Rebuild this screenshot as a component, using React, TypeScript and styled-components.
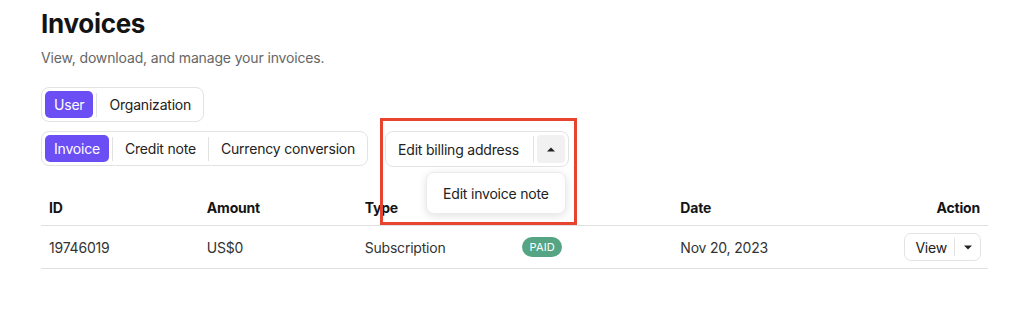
import React from 'react';
import styled, { createGlobalStyle } from 'styled-components';

const GlobalStyle = createGlobalStyle`
  body {
    margin: 0;
    background: #fff;
    font-family: Inter, "Noto Sans", sans-serif;
    color: #1c1c1c;
    letter-spacing: -0.2px;
  }
`;

const Page = styled.div`
  padding: 8px 36px 0 41px;
`;

const Title = styled.h1`
  margin: 0;
  font-size: 26px;
  line-height: 32px;
  font-weight: 700;
  letter-spacing: -0.3px;
  color: #141414;
`;

const Subtitle = styled.p`
  margin: 8px 0 0;
  font-size: 14px;
  line-height: 20px;
  letter-spacing: -0.15px;
  color: #666;
`;

const Controls = styled.div`
  margin-top: 19px;
  display: flex;
  flex-direction: column;
  align-items: flex-start;
  gap: 9px;
`;

const Toolbar = styled.div`
  display: flex;
  align-items: flex-start;
  gap: 17px;
`;

const Segmented = styled.div`
  display: inline-flex;
  align-items: center;
  padding: 3px;
  border: 1px solid #e3e3e3;
  border-radius: 8px;
  background: #fff;
`;

const Segment = styled.button<{ $active?: boolean }>`
  height: 27px;
  padding: 0 9px;
  border: none;
  border-radius: 5px;
  font-family: inherit;
  font-size: 14px;
  letter-spacing: inherit;
  cursor: pointer;
  background: ${(p) => (p.$active ? '#6b4ff4' : 'transparent')};
  color: ${(p) => (p.$active ? '#fff' : '#222')};
`;

const Divider = styled.span<{ $h?: number }>`
  width: 1px;
  height: ${(p) => p.$h ?? 24}px;
  margin: 0 3px;
  background: #e2e2e2;
`;

const BillingWrap = styled.div`
  position: relative;
`;

const SplitButton = styled.div`
  display: inline-flex;
  align-items: center;
  padding: 3px;
  border: 1px solid #e3e3e3;
  border-radius: 8px;
  background: #fff;
`;

const SplitLabel = styled.span`
  padding: 0 11px 0 9px;
  font-size: 14px;
  color: #222;
`;

const CaretBox = styled.span`
  width: 28px;
  height: 28px;
  display: flex;
  align-items: center;
  justify-content: center;
  border-radius: 4px;
  background: #f1f1f1;
`;

const Menu = styled.div`
  position: absolute;
  top: calc(100% + 5px);
  right: 3px;
  z-index: 2;
  width: 140px;
  height: 42px;
  box-sizing: border-box;
  display: flex;
  align-items: center;
  justify-content: center;
  border: 1px solid #ececec;
  border-radius: 8px;
  background: #fff;
  box-shadow: 0 2px 8px rgba(0, 0, 0, 0.12);
  font-size: 14px;
  color: #222;
`;

const Highlight = styled.div`
  position: absolute;
  top: -13px;
  left: -5px;
  right: -8px;
  bottom: -58px;
  z-index: 3;
  border: 3px solid #e8432e;
  pointer-events: none;
`;

const Table = styled.table`
  margin-top: 22px;
  width: 947px;
  border-collapse: collapse;
  table-layout: fixed;
  font-size: 14px;
`;

const Th = styled.th<{ $right?: boolean }>`
  height: 36px;
  padding: 0 8px;
  text-align: ${(p) => (p.$right ? 'right' : 'left')};
  font-weight: 700;
  color: #141414;
  border-bottom: 1px solid #e0e0e0;
`;

const Td = styled.td<{ $right?: boolean }>`
  height: 42px;
  padding: 0 ${(p) => (p.$right ? 7 : 8)}px 0 8px;
  text-align: ${(p) => (p.$right ? 'right' : 'left')};
  color: #333;
  border-bottom: 1px solid #e0e0e0;
`;

const Badge = styled.span`
  display: inline-flex;
  align-items: center;
  height: 20px;
  padding: 0 7px;
  border-radius: 10px;
  background: #55a584;
  color: #fff;
  font-size: 11px;
  font-weight: 400;
  letter-spacing: 0.2px;
`;

const ViewButton = styled.span`
  display: inline-flex;
  align-items: center;
  height: 28px;
  box-sizing: border-box;
  padding: 0 8px 0 10px;
  border: 1px solid #e3e3e3;
  border-radius: 7px;
  background: #fff;
  font-size: 14px;
  color: #222;
`;

const ViewDivider = styled.span`
  width: 1px;
  height: 18px;
  margin: 0 9px 0 7px;
  background: #e2e2e2;
`;

const Caret: React.FC<{ up?: boolean }> = ({ up }) => (
  <svg width="8" height="5" viewBox="0 0 8 5">
    <polygon points={up ? '0,4.5 4,0.5 8,4.5' : '0,0.5 4,4.5 8,0.5'} fill="#222" />
  </svg>
);

const scopes = ['User', 'Organization'];
const docTypes = ['Invoice', 'Credit note', 'Currency conversion'];
const columns = ['ID', 'Amount', 'Type', '', 'Date', 'Action'];
const invoices = [
  { id: '19746019', amount: 'US$0', type: 'Subscription', status: 'PAID', date: 'Nov 20, 2023' },
];

const SegmentGroup: React.FC<{ items: string[]; active: number }> = ({ items, active }) => (
  <Segmented>
    {items.map((item, i) => (
      <React.Fragment key={item}>
        {i > 0 && <Divider />}
        <Segment $active={i === active}>{item}</Segment>
      </React.Fragment>
    ))}
  </Segmented>
);

export default function App() {
  return (
    <Page>
      <GlobalStyle />
      <Title>Invoices</Title>
      <Subtitle>View, download, and manage your invoices.</Subtitle>
      <Controls>
        <SegmentGroup items={scopes} active={0} />
        <Toolbar>
          <SegmentGroup items={docTypes} active={0} />
          <BillingWrap>
            <SplitButton>
              <SplitLabel>Edit billing address</SplitLabel>
              <Divider $h={26} />
              <CaretBox>
                <Caret up />
              </CaretBox>
            </SplitButton>
            <Menu>Edit invoice note</Menu>
            <Highlight />
          </BillingWrap>
        </Toolbar>
      </Controls>
      <Table>
        <thead>
          <tr>
            {columns.map((c, i) => (
              <Th key={i} $right={c === 'Action'}>
                {c}
              </Th>
            ))}
          </tr>
        </thead>
        <tbody>
          {invoices.map((inv) => (
            <tr key={inv.id}>
              <Td>{inv.id}</Td>
              <Td>{inv.amount}</Td>
              <Td>{inv.type}</Td>
              <Td>
                <Badge>{inv.status}</Badge>
              </Td>
              <Td>{inv.date}</Td>
              <Td $right>
                <ViewButton>
                  View
                  <ViewDivider />
                  <Caret />
                </ViewButton>
              </Td>
            </tr>
          ))}
        </tbody>
      </Table>
    </Page>
  );
}
